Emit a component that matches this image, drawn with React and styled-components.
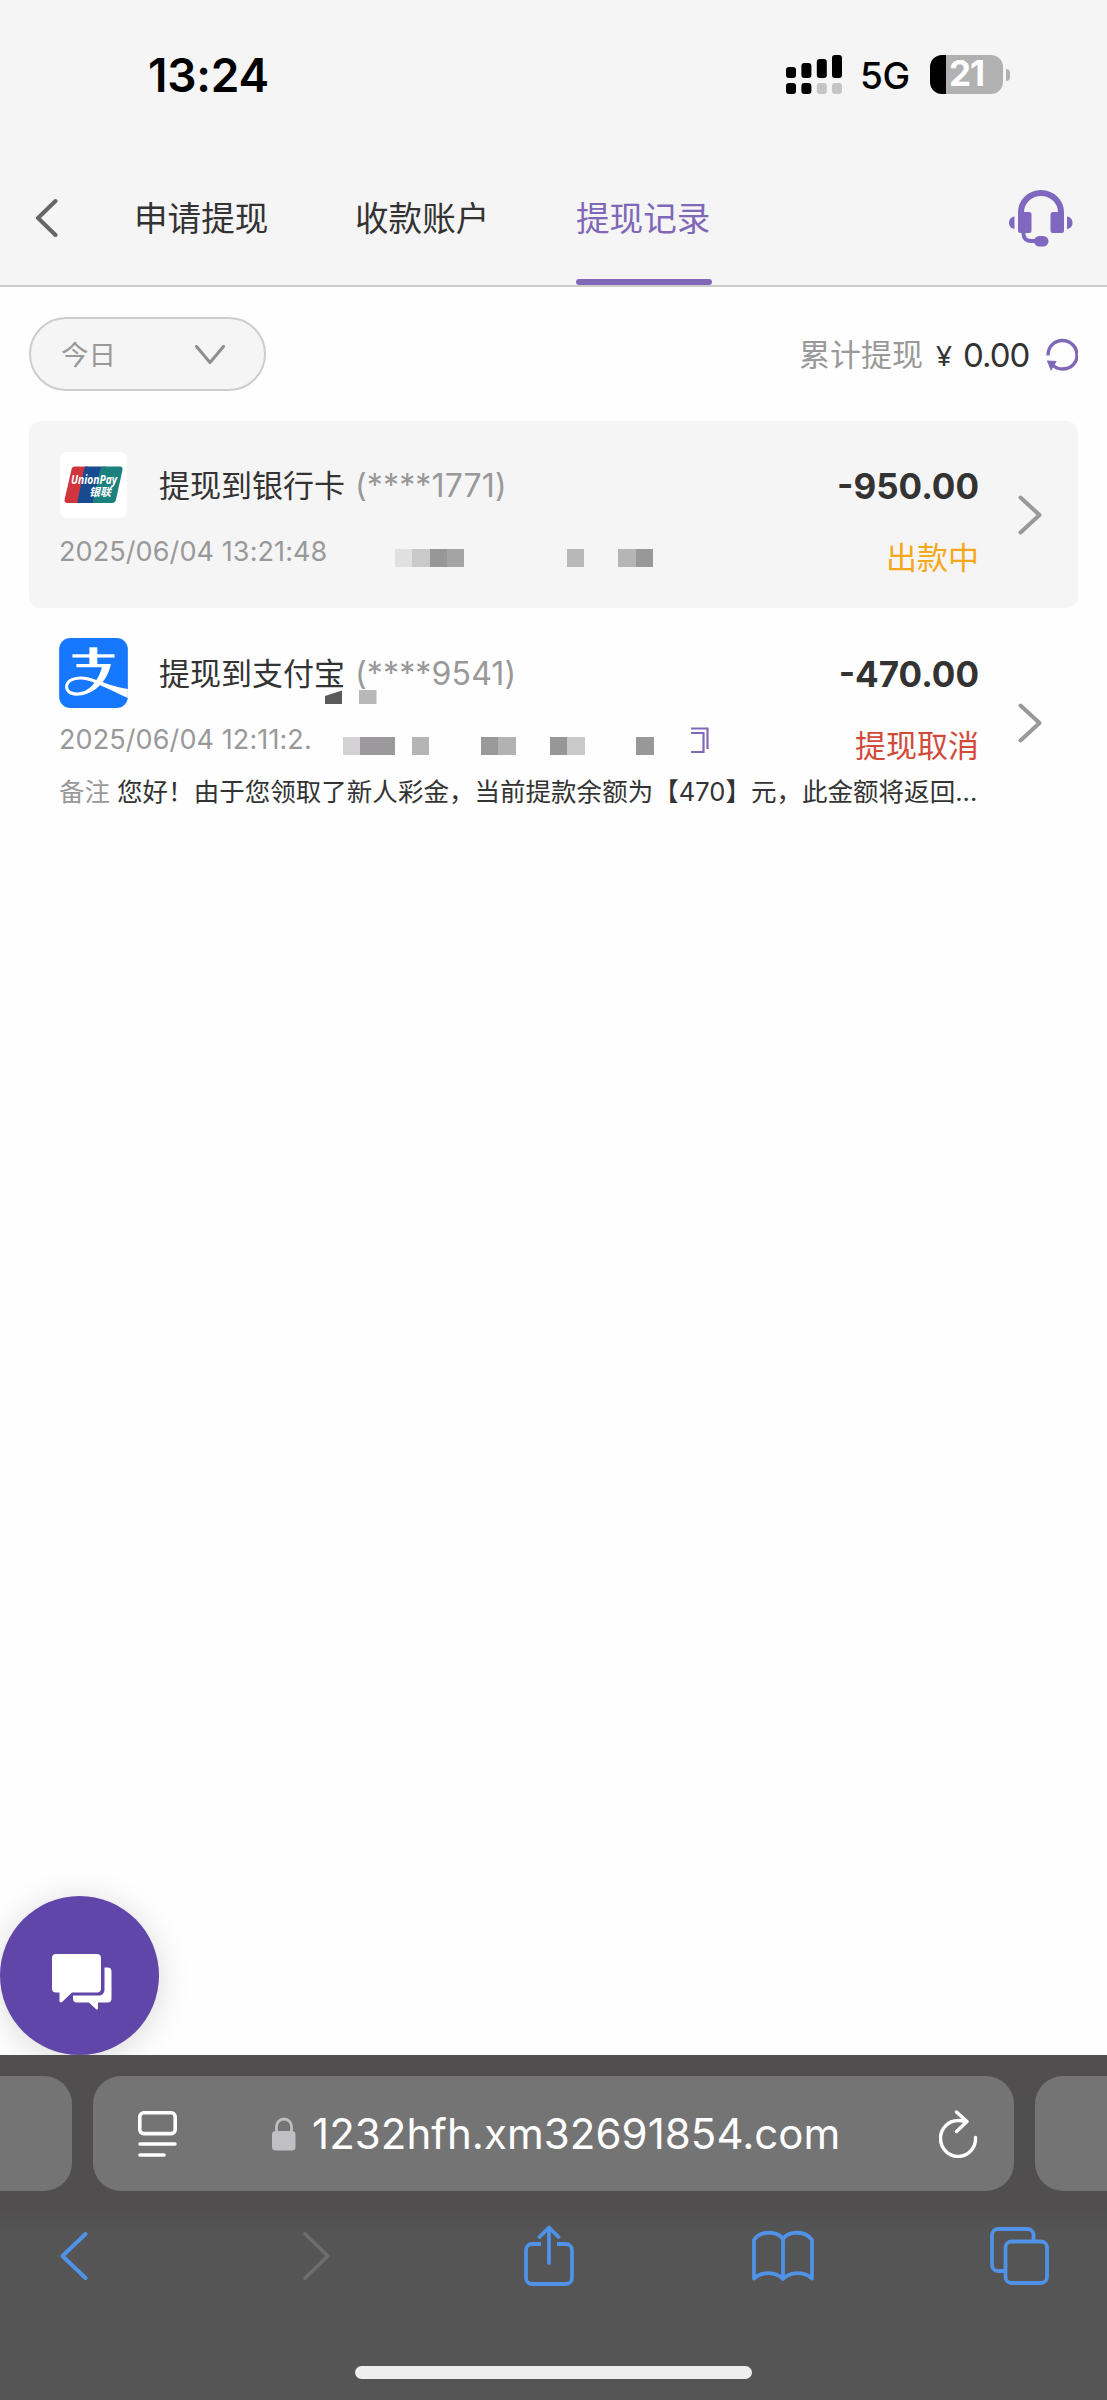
import React, { useState } from 'react';
import styled, { createGlobalStyle } from 'styled-components';

const GlobalStyle = createGlobalStyle`
	* {
		box-sizing: border-box;
	}

	body {
		margin: 0;
		background: #fefefe;
		font-family: Inter, 'Noto Sans CJK SC', sans-serif;
		color: #333;
	}

	svg {
		display: block;
		flex-shrink: 0;
	}
`;

const Screen = styled.div`
	width: 1107px;
	height: 2400px;
	display: flex;
	flex-direction: column;
	overflow: hidden;
`;

/* status bar */

const StatusBar = styled.div`
	height: 150px;
	padding: 0 97px 1px 148px;
	display: flex;
	align-items: center;
	background: #f5f5f5;
	color: #000;
`;

const Clock = styled.div`
	font-size: 46px;
	font-weight: 600;
	line-height: 50px;
	letter-spacing: -0.2px;
`;

const StatusIcons = styled.div`
	margin-left: auto;
	display: flex;
	align-items: center;
`;

const Network = styled.div`
	width: 68px;
	padding-left: 18px;
	padding-top: 2px;
	font-size: 37px;
	font-weight: 500;
	line-height: 40px;
	letter-spacing: -0.4px;
	white-space: nowrap;
`;

const Battery = styled.div`
	width: 73px;
	height: 39px;
	margin-left: 20px;
	border-radius: 12px;
	background: linear-gradient(to right, #000 16px, #b1b1b1 16px);
	color: #fff;
	font-size: 35px;
	font-weight: 700;
	line-height: 37px;
	letter-spacing: -1px;
	padding-left: 19px;
`;

const BatteryTip = styled.div`
	width: 4px;
	height: 12px;
	margin-left: 3px;
	border-radius: 0 4px 4px 0;
	background: #b1b1b1;
`;

/* page header */

const Header = styled.div`
	height: 137px;
	padding: 0 34px 0 36px;
	display: flex;
	align-items: stretch;
	background: #f5f5f5;
	border-bottom: 2px solid #cbcbcb;
`;

const HeaderIcon = styled.div`
	display: flex;
	align-items: center;
	padding-top: 1px;
	margin-left: ${props => (props.$end ? 'auto' : '0')};
`;

const Tabs = styled.div`
	display: flex;
	gap: 85px;
	margin-left: 76px;
`;

const Tab = styled.button`
	width: 136px;
	border: 0;
	padding: 0;
	background: none;
	display: flex;
	flex-direction: column;
	justify-content: space-between;
	font: 400 33.6px/40px Inter, 'Noto Sans CJK SC', sans-serif;
	text-align: left;
	white-space: nowrap;
	color: ${props => (props.$active ? '#8068b8' : '#333')};

	&::before {
		content: '';
		height: 46px;
	}

	&::after {
		content: '';
		width: 136px;
		height: 6px;
		margin-top: 37px;
		border-radius: 4px;
		background: ${props => (props.$active ? '#8068b8' : 'transparent')};
	}
`;

/* filter row */

const Filters = styled.div`
	height: 134px;
	padding: 30px 29px 30px 29px;
	display: flex;
	justify-content: space-between;
	align-items: center;
`;

const DatePicker = styled.div`
	width: 237px;
	height: 74px;
	padding: 2px 39px 0 30px;
	display: flex;
	align-items: center;
	justify-content: space-between;
	border: 2px solid #cdcdcd;
	border-radius: 37px;
	background: #f5f5f5;
	color: #999;
	font-size: 27.5px;
	line-height: 40px;
`;

const Total = styled.div`
	display: flex;
	align-items: center;
	padding-top: 2px;
	font-size: 31px;
	line-height: 40px;
	color: #999;
`;

const Currency = styled.span`
	margin-left: 13px;
	width: 27px;
	font-family: 'Noto Sans', sans-serif;
	font-size: 28px;
	color: #333;
`;

const TotalValue = styled.span`
	width: 83px;
	font-size: 33px;
	letter-spacing: -1px;
	color: #333;
`;

/* records */

const Record = styled.div`
	margin: 0 29px;
	height: ${props => props.$height}px;
	padding: 0 36px 0 30px;
	display: flex;
	align-items: center;
	justify-content: space-between;
	border-radius: 12px;
	background: ${props => (props.$shaded ? '#f5f5f5' : 'transparent')};
`;

const RecordBody = styled.div`
	width: 920px;
	align-self: stretch;
	padding-top: ${props => props.$top}px;
`;

const Line = styled.div`
	display: flex;
	align-items: center;
	height: ${props => props.$height}px;
`;

const Logo = styled.div`
	width: 69px;
	height: 70px;
	margin-right: 31px;
	display: flex;
	align-items: center;
	justify-content: center;
`;

const UnionPayTile = styled.div`
	width: 67px;
	height: 66px;
	display: flex;
	align-items: center;
	justify-content: center;
	border-radius: 7px;
	background: #fff;
`;

const Title = styled.div`
	padding-top: 2px;
	font-size: 31px;
	line-height: 40px;
	white-space: nowrap;
`;

/* masked digits, the blocks hang just under the account text */
const Account = styled.span`
	position: relative;
	margin-left: 10px;
	font-size: 32px;
	letter-spacing: 0.15px;
	color: #999;

	svg {
		position: absolute;
		left: -30px;
		top: 35px;
	}
`;

const Amount = styled.div`
	margin-left: auto;
	padding-top: 1px;
	font-size: 35px;
	font-weight: 700;
	line-height: 40px;
`;

const Time = styled.div`
	width: ${props => props.$width}px;
	margin-bottom: 12px;
	font-size: 27px;
	line-height: 32px;
	letter-spacing: 0.1px;
	white-space: nowrap;
	color: #999;
`;

const Mosaic = styled.div`
	display: flex;
	height: 17.5px;
`;

const Pixel = styled.div`
	width: ${props => props.$count * 17.25}px;
	background: ${props => props.$color || 'transparent'};
`;

const CopyButton = styled.div`
	margin-left: 37px;
	margin-bottom: 11px;
`;

const Status = styled.div`
	margin-left: auto;
	font-size: 31px;
	line-height: 40px;
	color: ${props => props.$color};
`;

const Note = styled.div`
	margin-top: -10px;
	font-size: 25.5px;
	line-height: 36px;
	letter-spacing: 0.03px;
	white-space: nowrap;
	color: #333;

	span {
		margin-right: 7px;
		color: #999;
	}
`;

/* floating chat */

const Spacer = styled.div`
	flex: 1;
	display: flex;
	align-items: flex-end;
	overflow: hidden;
`;

const ChatButton = styled.div`
	width: 159px;
	height: 159px;
	border-radius: 50%;
	display: flex;
	align-items: center;
	justify-content: center;
	padding-left: 4px;
	padding-top: 13px;
	background: #6046a9;
	box-shadow: 0 4px 32px rgba(0, 0, 0, 0.15);
`;

/* browser chrome */

const Browser = styled.div`
	height: 345px;
	display: flex;
	flex-direction: column;
	align-items: center;
	background: linear-gradient(#504e4f 0, #504e4f 150px, #555 180px);
`;

const AddressRow = styled.div`
	width: 1107px;
	margin-top: 21px;
	display: flex;
	justify-content: space-between;
`;

const SideTab = styled.div`
	width: 72px;
	height: 115px;
	background: #757475;
	border-radius: ${props => (props.$right ? '28px 0 0 28px' : '0 28px 28px 0')};
`;

const AddressBar = styled.div`
	width: 921px;
	height: 115px;
	padding: 0 36px 0 45px;
	display: flex;
	align-items: center;
	justify-content: space-between;
	border-radius: 28px;
	background: #757475;
	color: #fff;
`;

const Address = styled.div`
	display: flex;
	align-items: center;
	gap: 16px;
	margin-left: 94px;
	margin-right: auto;
	font-size: 42px;
	line-height: 50px;
	letter-spacing: 0.05px;
	white-space: nowrap;
`;

const Toolbar = styled.div`
	width: 1107px;
	height: 130px;
	padding: 0 57px 0 43px;
	display: flex;
	align-items: center;
	justify-content: space-between;
`;

const ToolButton = styled.div`
	width: 62px;
	display: flex;
	justify-content: center;
	padding-left: ${props => props.$indent || 0}px;
`;

const HomeBar = styled.div`
	width: 397px;
	height: 13px;
	margin-top: 45px;
	border-radius: 7px;
	background: #eee;
`;

const Arrow = ({ width, height, color, stroke = 4, points }) => (
	<svg width={width} height={height} viewBox={`0 0 ${width} ${height}`}>
		<polyline
			points={points}
			fill='none'
			stroke={color}
			strokeWidth={stroke}
			strokeLinecap='round'
			strokeLinejoin='round'
		/>
	</svg>
);

const SignalIcon = () => (
	<svg width='56' height='39' viewBox='0 0 56 39'>
		<rect x='0' y='12' width='10' height='11' rx='3' />
		<rect x='15.4' y='8' width='10' height='15' rx='3' />
		<rect x='30.8' y='4' width='10' height='19' rx='3' />
		<rect x='46' y='0' width='10' height='23' rx='3' />
		<rect x='0' y='28' width='10' height='11' rx='3' />
		<rect x='15.4' y='28' width='10' height='11' rx='3' />
		<rect x='30.8' y='28' width='10' height='11' rx='3' fill='#c4c4c4' />
		<rect x='46' y='28' width='10' height='11' rx='3' fill='#c4c4c4' />
	</svg>
);

const HeadsetIcon = () => (
	<svg width='64' height='57' viewBox='0 0 64 57' fill='#8068c0'>
		<path
			d='M12 26V22.500A20 19.500 0 0 1 52 22.500V26'
			fill='none'
			stroke='#8068c0'
			strokeWidth='6'
		/>
		<rect x='9' y='22' width='13.500' height='21' rx='2.500' />
		<rect x='41.500' y='22' width='13.500' height='21' rx='2.500' />
		<path d='M5.500 26.500v12.500C2 38.500 0 36 0 32.700s2-5.700 5.500-6.200z' />
		<path d='M58 26.500v12.500c3.500-.5 5.500-3 5.500-6.300s-2-5.700-5.500-6.200z' />
		<path d='M14.500 42v2c0 4.500 3 7 8 7h6' fill='none' stroke='#8068c0' strokeWidth='4' />
		<rect x='25' y='46' width='14.500' height='10.500' rx='5.250' />
	</svg>
);

const RefreshIcon = () => (
	<svg width='32' height='34' viewBox='0 0 32 34'>
		<path
			d='M2 17.500C2 8.500 8.500 2.500 16.500 2.500S31 9 31 17s-6 14-14.500 14c-4 0-7.500-1.500-9.500-4'
			fill='none'
			stroke='#8068b8'
			strokeWidth='3.400'
		/>
		<path d='M.8 22.500l10 .4-5.800 10z' fill='#8068b8' />
	</svg>
);

const UnionPayIcon = () => (
	<svg width='59' height='38' viewBox='0 0 59 38'>
		<path d='M11 0.500H24L15 37H3.500C1 37 0 35.500.700 33L7.500 3.500C8 1.500 9 .5 11 .5z' fill='#d0343c' />
		<path d='M22 0.500H42L33 37H13C14 37 13.500 35 14 33L20 4C20.500 1.500 20.500.5 22 .5z' fill='#174a90' />
		<path d='M41 0.500H56C58 .5 59 2 58.500 4L52 33.500C51.500 36 50 37 48 37H29.500C28.500 36 29 34.500 29.500 33L36 4C37 1.500 38.500.5 41 .5z' fill='#1c807e' />
		<text
			x='7'
			y='18'
			fill='#fff'
			fontFamily='Open Sans, sans-serif'
			fontWeight='700'
			fontStyle='italic'
			fontSize='12'
			textLength='46'
			lengthAdjust='spacingAndGlyphs'
		>
			UnionPay
		</text>
		<text
			x='25'
			y='30'
			fill='#fff'
			fontFamily='Noto Sans CJK SC, sans-serif'
			fontWeight='700'
			fontStyle='italic'
			fontSize='11'
		>
			银联
		</text>
	</svg>
);

const AlipayIcon = () => (
	<svg width='69' height='70' viewBox='0 0 207 211'>
		<rect width='207' height='211' rx='34' fill='#1677ff' />
		<rect x='40' y='49' width='127' height='10' fill='#fff' />
		<rect x='91' y='28' width='24' height='56' fill='#fff' />
		<path
			d='M52 78H156C150 106 138 128 118 147C98 166 74 174 52 174C30 174 18 162 18 147C18 126 40 116 66 116C92 116 124 132 150 140C172 147 190 151 207 154V181C176 168 138 148 108 136C92 129 78 125 64 125C42 125 27 134 27 147C27 158 38 164 54 164C74 164 90 154 102 140C116 124 124 106 129 88H52z'
			fill='#fff'
		/>
	</svg>
);

const CopyIcon = () => (
	<svg width='18' height='27' viewBox='0 0 18 27' fill='none' stroke='#8068b8' strokeWidth='2.200'>
		<path d='M0 1.500H16.500V22' />
		<path d='M0 6H12.500V25H0' />
	</svg>
);

const ChatIcon = () => (
	<svg width='60' height='56' viewBox='0 0 60 56' fill='#fff'>
		<path d='M4 0h41a4 4 0 0 1 4 4v30.500a4 4 0 0 1-4 4H20L10 48c-1 .8-2.500.5-2.500-1V38.500H4a4 4 0 0 1-4-4V4a4 4 0 0 1 4-4z' />
		<path d='M52.500 13.500H55.500a4 4 0 0 1 4 4V44.500a4 4 0 0 1-4 4H46V54c0 1.500-1.200 2-2.200 1L37 48.500H25a4 4 0 0 1-4-4V41.500H47a5.500 5.500 0 0 0 5.500-5.500z' />
	</svg>
);

const PageIcon = () => (
	<svg width='40' height='46' viewBox='0 0 40 46' fill='none' stroke='#fff' strokeWidth='3.600'>
		<rect x='1.800' y='1.800' width='35.400' height='20.800' rx='4' />
		<path d='M2 33H37M2 44H26' strokeLinecap='round' />
	</svg>
);

const LockIcon = () => (
	<svg width='24' height='34' viewBox='0 0 24 34'>
		<path
			d='M4.500 15V9.500a7.500 7.500 0 0 1 15 0V15'
			fill='none'
			stroke='#bdbcc0'
			strokeWidth='2.800'
		/>
		<rect x='0' y='14' width='23.500' height='19.500' rx='3.500' fill='#c0bfc4' />
	</svg>
);

const ReloadIcon = () => (
	<svg width='39' height='48' viewBox='0 0 39 48'>
		<g fill='none' stroke='#fff' strokeWidth='3.400' strokeLinecap='round' strokeLinejoin='round'>
			<path d='M36.500 27.500A17.500 18 0 1 1 19 10.500c3 0 5 .2 8 1' />
			<path d='M17.500 2L28 11.500 17.500 21.500' />
		</g>
	</svg>
);

const ShareIcon = () => (
	<svg width='50' height='62' viewBox='0 0 50 62'>
		<g fill='none' stroke='#4f92e6' strokeWidth='3.800' strokeLinecap='round' strokeLinejoin='round'>
			<path d='M17 19H8a6 6 0 0 0-6 6V53a6 6 0 0 0 6 6H42a6 6 0 0 0 6-6V25a6 6 0 0 0-6-6H33' strokeLinecap='butt' />
			<path d='M25 38V2.500M15.500 12L25 2.500l9.500 9.500' />
		</g>
	</svg>
);

const BookIcon = () => (
	<svg width='62' height='52' viewBox='0 0 62 52'>
		<g fill='none' stroke='#4f92e6' strokeWidth='3.800' strokeLinejoin='round'>
			<path d='M2 48.500V10C8 .5 25 .5 31 9C37 .5 54 .5 60 10V48.500C52 41 38 41.500 31 49C24 41.500 10 41 2 48.500z' />
			<path d='M31 9V49' />
		</g>
	</svg>
);

const TabsIcon = () => (
	<svg width='59' height='58' viewBox='0 0 59 58'>
		<g fill='none' stroke='#4f92e6' strokeWidth='3.800'>
			<path d='M43.500 14V8a6 6 0 0 0-6-6H8a6 6 0 0 0-6 6V38a6 6 0 0 0 6 6H15' />
			<rect x='15.500' y='14.500' width='41.500' height='41.500' rx='6' />
		</g>
	</svg>
);

const tabNames = ['申请提现', '收款账户', '提现记录'];

const firstMosaic = [
	[1, '#e0e0e0'],
	[1, '#c9c9c9'],
	[1, '#979797'],
	[1, '#a4a4a4'],
	[5.95],
	[1, '#b8b8b8'],
	[2],
	[1, '#b5b5b5'],
	[1, '#989898']
];

const secondMosaic = [
	[1, '#d3d1d4'],
	[2, '#9c999d'],
	[1],
	[1, '#b5b5b5'],
	[3],
	[1, '#999'],
	[1, '#b2b2b2'],
	[2],
	[1, '#979797'],
	[1, '#c9c9c9'],
	[3],
	[1, '#989898']
];

const Pixels = ({ data }) => (
	<Mosaic>
		{data.map(([count, color], index) => (
			<Pixel key={index} $count={count} $color={color} />
		))}
	</Mosaic>
);

const App = () => {
	const [active, setActive] = useState(2);

	return (
		<Screen>
			<GlobalStyle />

			<StatusBar>
				<Clock>13:24</Clock>
				<StatusIcons>
					<SignalIcon />
					<Network>5G</Network>
					<Battery>21</Battery>
					<BatteryTip />
				</StatusIcons>
			</StatusBar>

			<Header>
				<HeaderIcon>
					<Arrow width={22} height={40} color='#666' points='19.5,3 2,20 19.5,37' />
				</HeaderIcon>
				<Tabs>
					{tabNames.map((name, index) => (
						<Tab key={name} $active={index === active} onClick={() => setActive(index)}>
							{name}
						</Tab>
					))}
				</Tabs>
				<HeaderIcon $end>
					<HeadsetIcon />
				</HeaderIcon>
			</Header>

			<Filters>
				<DatePicker>
					今日
					<Arrow width={30} height={20} color='#8e8e8e' stroke={3} points='1.5,1.5 15,17.5 28.500,1.500' />
				</DatePicker>
				<Total>
					累计提现
					<Currency>¥</Currency>
					<TotalValue>0.00</TotalValue>
					<RefreshIcon />
				</Total>
			</Filters>

			<Record $height={187} $shaded>
				<RecordBody $top={29}>
					<Line $height={70}>
						<Logo>
							<UnionPayTile>
								<UnionPayIcon />
							</UnionPayTile>
						</Logo>
						<Title>
							提现到银行卡
							<Account>(****1771)</Account>
						</Title>
						<Amount>-950.00</Amount>
					</Line>
					<Line $height={76}>
						<Time $width={336}>2025/06/04 13:21:48</Time>
						<Pixels data={firstMosaic} />
						<Status $color='#f5a81c'>出款中</Status>
					</Line>
				</RecordBody>
				<Arrow width={24} height={40} color='#999' points='2.5,2.500 21.5,20 2.500,37.500' />
			</Record>

			<Record $height={230}>
				<RecordBody $top={30}>
					<Line $height={70}>
						<Logo>
							<AlipayIcon />
						</Logo>
						<Title>
							提现到支付宝
							<Account>
								(****9541)
								<svg width='52' height='15' viewBox='0 0 52 15'>
									<path d='M0 7L17 1.500V15H0z' fill='#5a5a5a' />
									<rect x='34' y='1' width='17.500' height='14' fill='#b8b8b8' />
								</svg>
							</Account>
						</Title>
						<Amount>-470.00</Amount>
					</Line>
					<Line $height={76}>
						<Time $width={284}>2025/06/04 12:11:2.</Time>
						<Pixels data={secondMosaic} />
						<CopyButton>
							<CopyIcon />
						</CopyButton>
						<Status $color='#d24a3a'>提现取消</Status>
					</Line>
					<Note>
						<span>备注</span>您好！由于您领取了新人彩金，当前提款余额为【470】元，此金额将返回...
					</Note>
				</RecordBody>
				<Arrow width={24} height={40} color='#999' points='2.5,2.500 21.5,20 2.500,37.500' />
			</Record>

			<Spacer>
				<ChatButton>
					<ChatIcon />
				</ChatButton>
			</Spacer>

			<Browser>
				<AddressRow>
					<SideTab />
					<AddressBar>
						<PageIcon />
						<Address>
							<LockIcon />
							1232hfh.xm32691854.com
						</Address>
						<ReloadIcon />
					</AddressBar>
					<SideTab $right />
				</AddressRow>
				<Toolbar>
					<ToolButton>
						<Arrow width={28} height={50} color='#4f92e6' points='25.5,3 2.500,25 25.500,47' />
					</ToolButton>
					<ToolButton $indent={13}>
						<Arrow width={28} height={50} color='#6e6e6e' stroke={3.6} points='2,3 25,25 2,47' />
					</ToolButton>
					<ToolButton $indent={4}>
						<ShareIcon />
					</ToolButton>
					<ToolButton>
						<BookIcon />
					</ToolButton>
					<ToolButton>
						<TabsIcon />
					</ToolButton>
				</Toolbar>
				<HomeBar />
			</Browser>
		</Screen>
	);
};

export default App;
